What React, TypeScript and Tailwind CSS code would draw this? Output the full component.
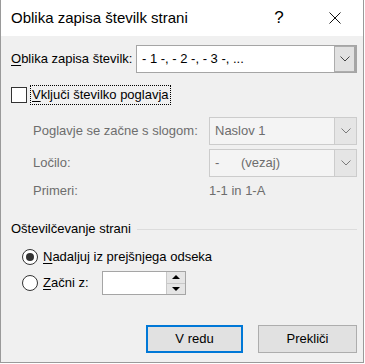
import React from "react";

const Chevron = ({ color = "#555" }: { color?: string }) => (
  <svg width="10" height="6" viewBox="0 0 10 6">
    <path d="M0.5 0.5 L5 5 L9.5 0.5" fill="none" stroke={color} strokeWidth="1" />
  </svg>
);

const Combo = ({
  value,
  disabled,
  width,
}: {
  value: React.ReactNode;
  disabled?: boolean;
  width: string;
}) => (
  <div
    className={`${width} h-[28px] flex border ${
      disabled ? "border-[#cccccc] bg-[#f4f4f4] text-[#6d6d6d]" : "border-[#a5a5a5] bg-white text-black"
    }`}
  >
    <div className="flex-1 flex items-center pl-[5px] whitespace-pre">{value}</div>
    <div
      className={`w-[22px] flex items-center justify-center ${
        disabled ? "bg-[#e5e5e5] border-l border-[#cccccc]" : "bg-[#e1e1e1] border-l border-[#adadad] border-r-2 border-y border-r-[#a5a5a5]"
      }`}
    >
      <Chevron color={disabled ? "#7a7a7a" : "#444"} />
    </div>
  </div>
);

export default function App() {
  return (
    <div
      className="w-[364px] h-[363px] flex flex-col border-x border-b border-[#9a9a9a] text-[13px] leading-[18px] text-black whitespace-nowrap"
      style={{ fontFamily: '"Liberation Sans", Arial, sans-serif' }}
    >
      {/* Title bar */}
      <div className="h-[36px] bg-white flex items-center pl-[10px] shrink-0">
        <span className="flex-1 text-[15px]">Oblika zapisa številk strani</span>
        <span className="w-[20px] text-center text-[17px] mr-[39px]">?</span>
        <span className="w-[14px] h-[14px] flex items-center justify-center mr-[21px]">
          <svg width="12" height="12" viewBox="0 0 12 12">
            <path d="M0.5 0.5 L11.5 11.5 M11.5 0.5 L0.5 11.5" stroke="#111" strokeWidth="1" />
          </svg>
        </span>
      </div>

      {/* Body */}
      <div className="flex-1 bg-[#f0f0f0] flex flex-col pl-[10px] pr-[5px] pt-[9px]">
        <div className="h-[28px] flex items-center">
          <div className="w-[125px]">
            <span className="underline underline-offset-2">O</span>blika zapisa številk:
          </div>
          <Combo width="w-[221px]" value="- 1 -, - 2 -, - 3 -, ..." />
        </div>

        <div className="mt-[12px] h-[20px] flex items-center">
          <div className="w-[16px] h-[16px] border border-[#333] bg-white" />
          <div className="ml-[3px] h-[20px] px-[1px] flex items-center border border-dotted border-black">
            <span className="underline underline-offset-2">V</span>ključi številko poglavja
          </div>
        </div>

        <div className="mt-[12px] h-[28px] flex items-center pl-[22px] text-[#6d6d6d]">
          <div className="w-[176px]">Poglavje se začne s slogom:</div>
          <Combo disabled width="w-[148px]" value={"Naslov 1"} />
        </div>

        <div className="mt-[4px] h-[28px] flex items-center pl-[22px] text-[#6d6d6d]">
          <div className="w-[176px]">Ločilo:</div>
          <Combo disabled width="w-[148px]" value={"-      (vezaj)"} />
        </div>

        <div className="mt-[4px] h-[20px] flex items-center pl-[22px] text-[#6d6d6d]">
          <div className="w-[176px]">Primeri:</div>
          <div>1-1 in 1-A</div>
        </div>

        <div className="mt-[18px] h-[20px] flex items-center">
          <div>Oštevilčevanje strani</div>
          <div className="flex-1 h-px bg-[#dcdcdc] ml-[6px] mr-[1px]" />
        </div>

        <div className="mt-[8px] h-[20px] flex items-center pl-[11px]">
          <div className="w-[16px] h-[16px] rounded-full border border-[#333] bg-white flex items-center justify-center">
            <div className="w-[8px] h-[8px] rounded-full bg-[#333]" />
          </div>
          <div className="ml-[5px]">
            <span className="underline underline-offset-2">N</span>adaljuj iz prejšnjega odseka
          </div>
        </div>

        <div className="mt-[4px] h-[24px] flex items-center pl-[11px]">
          <div className="w-[16px] h-[16px] rounded-full border border-[#333] bg-white" />
          <div className="ml-[5px] w-[59px]">
            <span className="underline underline-offset-2">Z</span>ačni z:
          </div>
          <div className="w-[84px] h-[24px] border border-[#a5a5a5] bg-white flex justify-end">
            <div className="w-[19px] flex flex-col">
              <div className="flex-1 bg-[#e5e5e5] border-l border-b border-[#c8c8c8] flex items-center justify-center">
                <svg width="8" height="4" viewBox="0 0 8 4">
                  <path d="M0 4 L4 0 L8 4 Z" fill="#000" />
                </svg>
              </div>
              <div className="flex-1 bg-[#e5e5e5] border-l border-[#c8c8c8] flex items-center justify-center">
                <svg width="8" height="4" viewBox="0 0 8 4">
                  <path d="M0 0 L8 0 L4 4 Z" fill="#000" />
                </svg>
              </div>
            </div>
          </div>
        </div>

        <div className="mt-[30px] h-[28px] flex justify-end gap-[15px] pr-[1px]">
          <div className="w-[97px] h-[28px] bg-[#e1e1e1] border-2 border-[#0078d7] flex items-center justify-center">
            V redu
          </div>
          <div className="w-[99px] h-[28px] bg-[#e1e1e1] border border-[#adadad] flex items-center justify-center">
            Prekliči
          </div>
        </div>
      </div>
    </div>
  );
}
